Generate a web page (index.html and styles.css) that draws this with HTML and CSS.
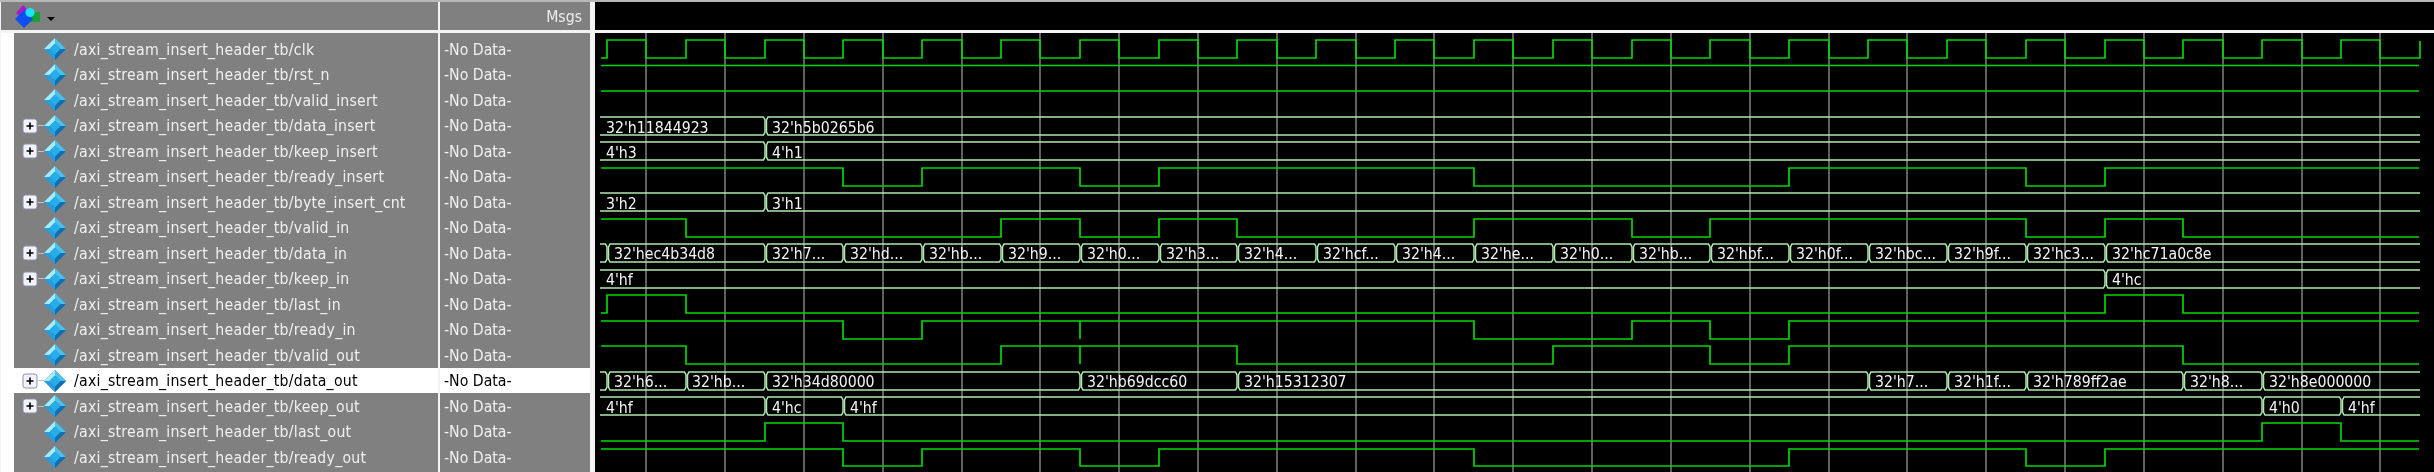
FILE: index.html
```html
<!DOCTYPE html>
<html lang="en">
<head>
<meta charset="utf-8">
<title>Wave</title>
<link rel="stylesheet" href="styles.css">
</head>
<body>
<svg class="defs" width="0" height="0" aria-hidden="true">
  <defs>
    <symbol id="sig" viewBox="0 0 22 22">
      <polygon points="11,0 22,11 11,22 0,11" fill="#1c8fd0"/>
      <polygon points="11,0 0,11 5.5,11 11,5.5" fill="#a8ecfa"/>
      <polygon points="11,0 22,11 16.5,11 11,5.5" fill="#4cc0ea"/>
      <polygon points="0,11 11,22 11,16.5 5.5,11" fill="#2a9cdc"/>
      <polygon points="22,11 11,22 11,16.5 16.5,11" fill="#0f6fb0"/>
      <polygon points="11,5.5 16.5,11 11,16.5 5.5,11" fill="#27aee8"/>
    </symbol>
    <symbol id="plus" viewBox="0 0 16 16">
      <rect x="1" y="1" width="14" height="14" rx="2.5" fill="#f2f2fa" stroke="#8c8fa8"/>
      <path d="M4.5 8h7M8 4.5v7" stroke="#000" stroke-width="1.6"/>
    </symbol>
  </defs>
</svg>
<main class="app">
  <section class="col col-names">
    <header class="head">
      <svg class="logo" viewBox="0 0 28 26" width="28" height="26">
        <polygon points="9,1 17,9 9,16 2,9" fill="#a41cc8"/>
        <rect x="16" y="8" width="10" height="10" fill="#18a038"/>
        <polygon points="10,6 19,15 10,24 1,15" fill="#0d4ff0"/>
        <circle cx="16" cy="8.5" r="4.6" fill="#1fe4f4"/>
      </svg>
      <span class="caret"></span>
    </header>
    <div class="list">
      <div class="row"><span class="exp"></span><svg class="ico"><use href="#sig"/></svg><span class="name">/axi_stream_insert_header_tb/clk</span></div>
      <div class="row"><span class="exp"></span><svg class="ico"><use href="#sig"/></svg><span class="name">/axi_stream_insert_header_tb/rst_n</span></div>
      <div class="row"><span class="exp"></span><svg class="ico"><use href="#sig"/></svg><span class="name">/axi_stream_insert_header_tb/valid_insert</span></div>
      <div class="row"><span class="exp on"><svg class="box"><use href="#plus"/></svg></span><svg class="ico"><use href="#sig"/></svg><span class="name">/axi_stream_insert_header_tb/data_insert</span></div>
      <div class="row"><span class="exp on"><svg class="box"><use href="#plus"/></svg></span><svg class="ico"><use href="#sig"/></svg><span class="name">/axi_stream_insert_header_tb/keep_insert</span></div>
      <div class="row"><span class="exp"></span><svg class="ico"><use href="#sig"/></svg><span class="name">/axi_stream_insert_header_tb/ready_insert</span></div>
      <div class="row"><span class="exp on"><svg class="box"><use href="#plus"/></svg></span><svg class="ico"><use href="#sig"/></svg><span class="name">/axi_stream_insert_header_tb/byte_insert_cnt</span></div>
      <div class="row"><span class="exp"></span><svg class="ico"><use href="#sig"/></svg><span class="name">/axi_stream_insert_header_tb/valid_in</span></div>
      <div class="row"><span class="exp on"><svg class="box"><use href="#plus"/></svg></span><svg class="ico"><use href="#sig"/></svg><span class="name">/axi_stream_insert_header_tb/data_in</span></div>
      <div class="row"><span class="exp on"><svg class="box"><use href="#plus"/></svg></span><svg class="ico"><use href="#sig"/></svg><span class="name">/axi_stream_insert_header_tb/keep_in</span></div>
      <div class="row"><span class="exp"></span><svg class="ico"><use href="#sig"/></svg><span class="name">/axi_stream_insert_header_tb/last_in</span></div>
      <div class="row"><span class="exp"></span><svg class="ico"><use href="#sig"/></svg><span class="name">/axi_stream_insert_header_tb/ready_in</span></div>
      <div class="row"><span class="exp"></span><svg class="ico"><use href="#sig"/></svg><span class="name">/axi_stream_insert_header_tb/valid_out</span></div>
      <div class="row sel"><span class="exp on"><svg class="box"><use href="#plus"/></svg></span><svg class="ico"><use href="#sig"/></svg><span class="name">/axi_stream_insert_header_tb/data_out</span></div>
      <div class="row"><span class="exp on"><svg class="box"><use href="#plus"/></svg></span><svg class="ico"><use href="#sig"/></svg><span class="name">/axi_stream_insert_header_tb/keep_out</span></div>
      <div class="row"><span class="exp"></span><svg class="ico"><use href="#sig"/></svg><span class="name">/axi_stream_insert_header_tb/last_out</span></div>
      <div class="row"><span class="exp"></span><svg class="ico"><use href="#sig"/></svg><span class="name">/axi_stream_insert_header_tb/ready_out</span></div>
    </div>
  </section>
  <section class="col col-msgs">
    <header class="head head-msgs">Msgs</header>
    <div class="list list-msgs">
      <div class="row">-No Data-</div><div class="row">-No Data-</div><div class="row">-No Data-</div><div class="row">-No Data-</div><div class="row">-No Data-</div><div class="row">-No Data-</div><div class="row">-No Data-</div><div class="row">-No Data-</div><div class="row">-No Data-</div><div class="row">-No Data-</div><div class="row">-No Data-</div><div class="row">-No Data-</div><div class="row">-No Data-</div><div class="row sel">-No Data-</div><div class="row">-No Data-</div><div class="row">-No Data-</div><div class="row">-No Data-</div>
    </div>
  </section>
  <section class="col col-wave">
    <header class="head head-wave"></header>
    <svg class="wave" viewBox="595 33 1839 439" width="1839" height="439">
      <path class="grid" d="M646 33V472M725 33V472M804 33V472M883 33V472M962 33V472M1040 33V472M1119 33V472M1198 33V472M1277 33V472M1356 33V472M1434 33V472M1513 33V472M1592 33V472M1671 33V472M1750 33V472M1829 33V472M1907 33V472M1986 33V472M2065 33V472M2144 33V472M2223 33V472M2302 33V472M2380 33V472"/>

      <path class="sc" d="M601 58H607V40H646V58H686V40H725V58H765V40H804V58H843V40H883V58H922V40H962V58H1001V40H1040V58H1080V40H1119V58H1159V40H1198V58H1237V40H1277V58H1316V40H1356V58H1395V40H1434V58H1474V40H1513V58H1553V40H1592V58H1632V40H1671V58H1710V40H1750V58H1789V40H1829V58H1868V40H1907V58H1947V40H1986V58H2026V40H2065V58H2105V40H2144V58H2183V40H2223V58H2262V40H2302V58H2341V40H2380V58H2420V41"/>
      <path class="sc" d="M601 65.5H2419"/>
      <path class="sc" d="M601 91H2419"/>

      <path class="bus" d="M600 117H763.5L765 120V132L763.5 135H600"/>
      <path class="bus" d="M2420 117H768L766.5 120V132L768 135H2420"/>
      <text x="606" y="133">32'h11844923</text><text x="772" y="133">32'h5b0265b6</text>

      <path class="bus" d="M600 142H763.5L765 145V157L763.5 160H600"/>
      <path class="bus" d="M2420 142H768L766.5 145V157L768 160H2420"/>
      <text x="606" y="158">4'h3</text><text x="772" y="158">4'h1</text>

      <path class="sc" d="M601 168H843V186H922V168H1080V186H1159V168H1474V186H1789V168H2026V186H2105V168H2419"/>

      <path class="bus" d="M600 193H763.5L765 196V208L763.5 211H600"/>
      <path class="bus" d="M2420 193H768L766.5 196V208L768 211H2420"/>
      <text x="606" y="209">3'h2</text><text x="772" y="209">3'h1</text>

      <path class="sc" d="M601 219H686V237H1001V219H1080V237H1159V219H1237V237H1474V219H1632V237H1710V219H2026V237H2105V219H2183V237H2419"/>

      <path class="bus" d="M600 244H605.5L607 247V259L605.5 262H600"/>
      <path class="bus" d="M763.5 244H610L608.500 247V259L610 262H763.5L765 259V247Z"/>
      <path class="bus" d="M841.500 244H768L766.500 247V259L768 262H841.500L843 259V247Z"/>
      <path class="bus" d="M920.500 244H846L844.500 247V259L846 262H920.500L922 259V247Z"/>
      <path class="bus" d="M999.500 244H925L923.500 247V259L925 262H999.500L1001 259V247Z"/>
      <path class="bus" d="M1078.500 244H1004L1002.500 247V259L1004 262H1078.500L1080 259V247Z"/>
      <path class="bus" d="M1157.500 244H1083L1081.500 247V259L1083 262H1157.500L1159 259V247Z"/>
      <path class="bus" d="M1235.500 244H1162L1160.500 247V259L1162 262H1235.500L1237 259V247Z"/>
      <path class="bus" d="M1314.500 244H1240L1238.500 247V259L1240 262H1314.500L1316 259V247Z"/>
      <path class="bus" d="M1393.500 244H1319L1317.500 247V259L1319 262H1393.500L1395 259V247Z"/>
      <path class="bus" d="M1472.500 244H1398L1396.500 247V259L1398 262H1472.500L1474 259V247Z"/>
      <path class="bus" d="M1551.500 244H1477L1475.500 247V259L1477 262H1551.500L1553 259V247Z"/>
      <path class="bus" d="M1630.500 244H1556L1554.500 247V259L1556 262H1630.500L1632 259V247Z"/>
      <path class="bus" d="M1708.500 244H1635L1633.500 247V259L1635 262H1708.500L1710 259V247Z"/>
      <path class="bus" d="M1787.500 244H1713L1711.500 247V259L1713 262H1787.500L1789 259V247Z"/>
      <path class="bus" d="M1866.500 244H1792L1790.500 247V259L1792 262H1866.500L1868 259V247Z"/>
      <path class="bus" d="M1945.500 244H1871L1869.500 247V259L1871 262H1945.500L1947 259V247Z"/>
      <path class="bus" d="M2024.500 244H1950L1948.500 247V259L1950 262H2024.500L2026 259V247Z"/>
      <path class="bus" d="M2103.500 244H2029L2027.500 247V259L2029 262H2103.500L2105 259V247Z"/>
      <path class="bus" d="M2420 244H2108L2106.500 247V259L2108 262H2420"/>
      <text x="614" y="259">32'hec4b34d8</text><text x="772" y="259">32'h7...</text><text x="850" y="259">32'hd...</text><text x="929" y="259">32'hb...</text><text x="1008" y="259">32'h9...</text><text x="1087" y="259">32'h0...</text><text x="1166" y="259">32'h3...</text><text x="1244" y="259">32'h4...</text><text x="1323" y="259">32'hcf...</text><text x="1402" y="259">32'h4...</text><text x="1481" y="259">32'he...</text><text x="1560" y="259">32'h0...</text><text x="1639" y="259">32'hb...</text><text x="1717" y="259">32'hbf...</text><text x="1796" y="259">32'h0f...</text><text x="1875" y="259">32'hbc...</text><text x="1954" y="259">32'h9f...</text><text x="2033" y="259">32'hc3...</text><text x="2112" y="259">32'hc71a0c8e</text>

      <path class="bus" d="M600 270H2103.500L2105 273V285L2103.500 288H600"/>
      <path class="bus" d="M2420 270H2108L2106.500 273V285L2108 288H2420"/>
      <text x="606" y="285">4'hf</text><text x="2112" y="285">4'hc</text>

      <path class="sc" d="M601 313H607V295H686V313H2105V295H2183V313H2419"/>
      <path class="sc" d="M601 321H843V339H922V321H1474V339H1632V321H1710V339H1789V321H2419"/>
      <path class="sc" d="M1080 321V339"/>
      <path class="sc" d="M601 346H686V364H1001V346H1237V364H1553V346H1710V364H1789V346H2183V364H2419"/>
      <path class="sc" d="M1080 346V364"/>

      <path class="bus" d="M600 372H605.500L607 375V387L605.500 390H600"/>
      <path class="bus" d="M684.500 372H610L608.500 375V387L610 390H684.500L686 387V375Z"/>
      <path class="bus" d="M763.500 372H689L687.500 375V387L689 390H763.500L765 387V375Z"/>
      <path class="bus" d="M1078.500 372H768L766.500 375V387L768 390H1078.500L1080 387V375Z"/>
      <path class="bus" d="M1235.500 372H1083L1081.500 375V387L1083 390H1235.500L1237 387V375Z"/>
      <path class="bus" d="M1866.500 372H1240L1238.500 375V387L1240 390H1866.500L1868 387V375Z"/>
      <path class="bus" d="M1945.500 372H1871L1869.500 375V387L1871 390H1945.500L1947 387V375Z"/>
      <path class="bus" d="M2024.500 372H1950L1948.500 375V387L1950 390H2024.500L2026 387V375Z"/>
      <path class="bus" d="M2181.500 372H2029L2027.500 375V387L2029 390H2181.500L2183 387V375Z"/>
      <path class="bus" d="M2260.500 372H2186L2184.500 375V387L2186 390H2260.500L2262 387V375Z"/>
      <path class="bus" d="M2420 372H2265L2263.500 375V387L2265 390H2420"/>
      <text x="614" y="387">32'h6...</text><text x="692" y="387">32'hb...</text><text x="772" y="387">32'h34d80000</text><text x="1087" y="387">32'hb69dcc60</text><text x="1244" y="387">32'h15312307</text><text x="1875" y="387">32'h7...</text><text x="1954" y="387">32'h1f...</text><text x="2033" y="387">32'h789ff2ae</text><text x="2190" y="387">32'h8...</text><text x="2269" y="387">32'h8e000000</text>

      <path class="bus" d="M600 397H763.500L765 400V412L763.500 415H600"/>
      <path class="bus" d="M841.500 397H768L766.500 400V412L768 415H841.500L843 412V400Z"/>
      <path class="bus" d="M2260.500 397H846L844.500 400V412L846 415H2260.500L2262 412V400Z"/>
      <path class="bus" d="M2339.500 397H2265L2263.500 400V412L2265 415H2339.500L2341 412V400Z"/>
      <path class="bus" d="M2420 397H2344L2342.500 400V412L2344 415H2420"/>
      <text x="606" y="413">4'hf</text><text x="772" y="413">4'hc</text><text x="850" y="413">4'hf</text><text x="2269" y="413">4'h0</text><text x="2348" y="413">4'hf</text>

      <path class="sc" d="M601 441H765V423H843V441H2262V423H2341V441H2419"/>
      <path class="sc" d="M601 449H843V466H922V449H1080V466H1159V449H1474V466H1789V449H2026V466H2105V449H2419"/>
    </svg>
  </section>
</main>
</body>
</html>
```
FILE: styles.css
```css
html, body {
  margin: 0;
  padding: 0;
  background: #fff;
}

body {
  font-family: "DejaVu Sans Condensed", "Open Sans", "Liberation Sans", sans-serif;
  font-size: 15.7px;
  color: #f0f0f0;
}

.defs {
  position: absolute;
}

.app {
  display: flex;
  width: 2434px;
  height: 472px;
  overflow: hidden;
  background: #f4f4f4;
  border-top: 2px solid #b8b8b8;
  box-sizing: border-box;
  filter: blur(0.35px);
}

.col {
  display: flex;
  flex-direction: column;
}

.col-names {
  width: 437px;
  margin-left: 1px;
}

.col-msgs {
  width: 150px;
  margin-left: 2px;
}

.col-wave {
  flex: 1;
  margin-left: 5px;
}

.head {
  height: 28px;
  margin-bottom: 3px;
  background: #808080;
  display: flex;
  align-items: center;
  flex: none;
}

.head-msgs {
  justify-content: flex-end;
  padding-right: 8px;
  color: #ececec;
}

.head-wave {
  background: #000;
}

.logo {
  margin-left: 13px;
  margin-top: 1px;
}

.caret {
  margin-left: 5px;
  margin-top: 6px;
  border-left: 4px solid transparent;
  border-right: 4px solid transparent;
  border-top: 4px solid #000;
}

.list {
  flex: 1;
  padding-top: 3.25px;
  background: linear-gradient(90deg, #fff 13px, #808080 13px);
}

.list-msgs {
  background: #808080;
}

.row {
  height: 25.5px;
  display: flex;
  align-items: center;
  white-space: nowrap;
}

.list-msgs .row {
  padding-left: 4px;
}

.row.sel {
  background: #fff;
  color: #000;
}

.exp {
  width: 43px;
  flex: none;
  display: flex;
  align-items: center;
  padding-left: 21px;
  box-sizing: border-box;
}

.exp.on::after {
  content: "";
  flex: 1;
  height: 1px;
  background: #bfc3c8;
}

.box {
  width: 16px;
  height: 16px;
  flex: none;
}

.ico {
  width: 22px;
  height: 22px;
  flex: none;
}

.name {
  margin-left: 8px;
  letter-spacing: 0.25px;
}

.wave {
  display: block;
  flex: none;
  background: #000;
}

.grid {
  fill: none;
  stroke: #808080;
  stroke-width: 1.5;
}

.sc {
  fill: none;
  stroke: #00d800;
  stroke-width: 1.7;
}

.bus {
  fill: none;
  stroke: #b0e8b0;
  stroke-width: 1.5;
}

.wave text {
  font-size: 15.7px;
  fill: #f4f4f4;
}
```
